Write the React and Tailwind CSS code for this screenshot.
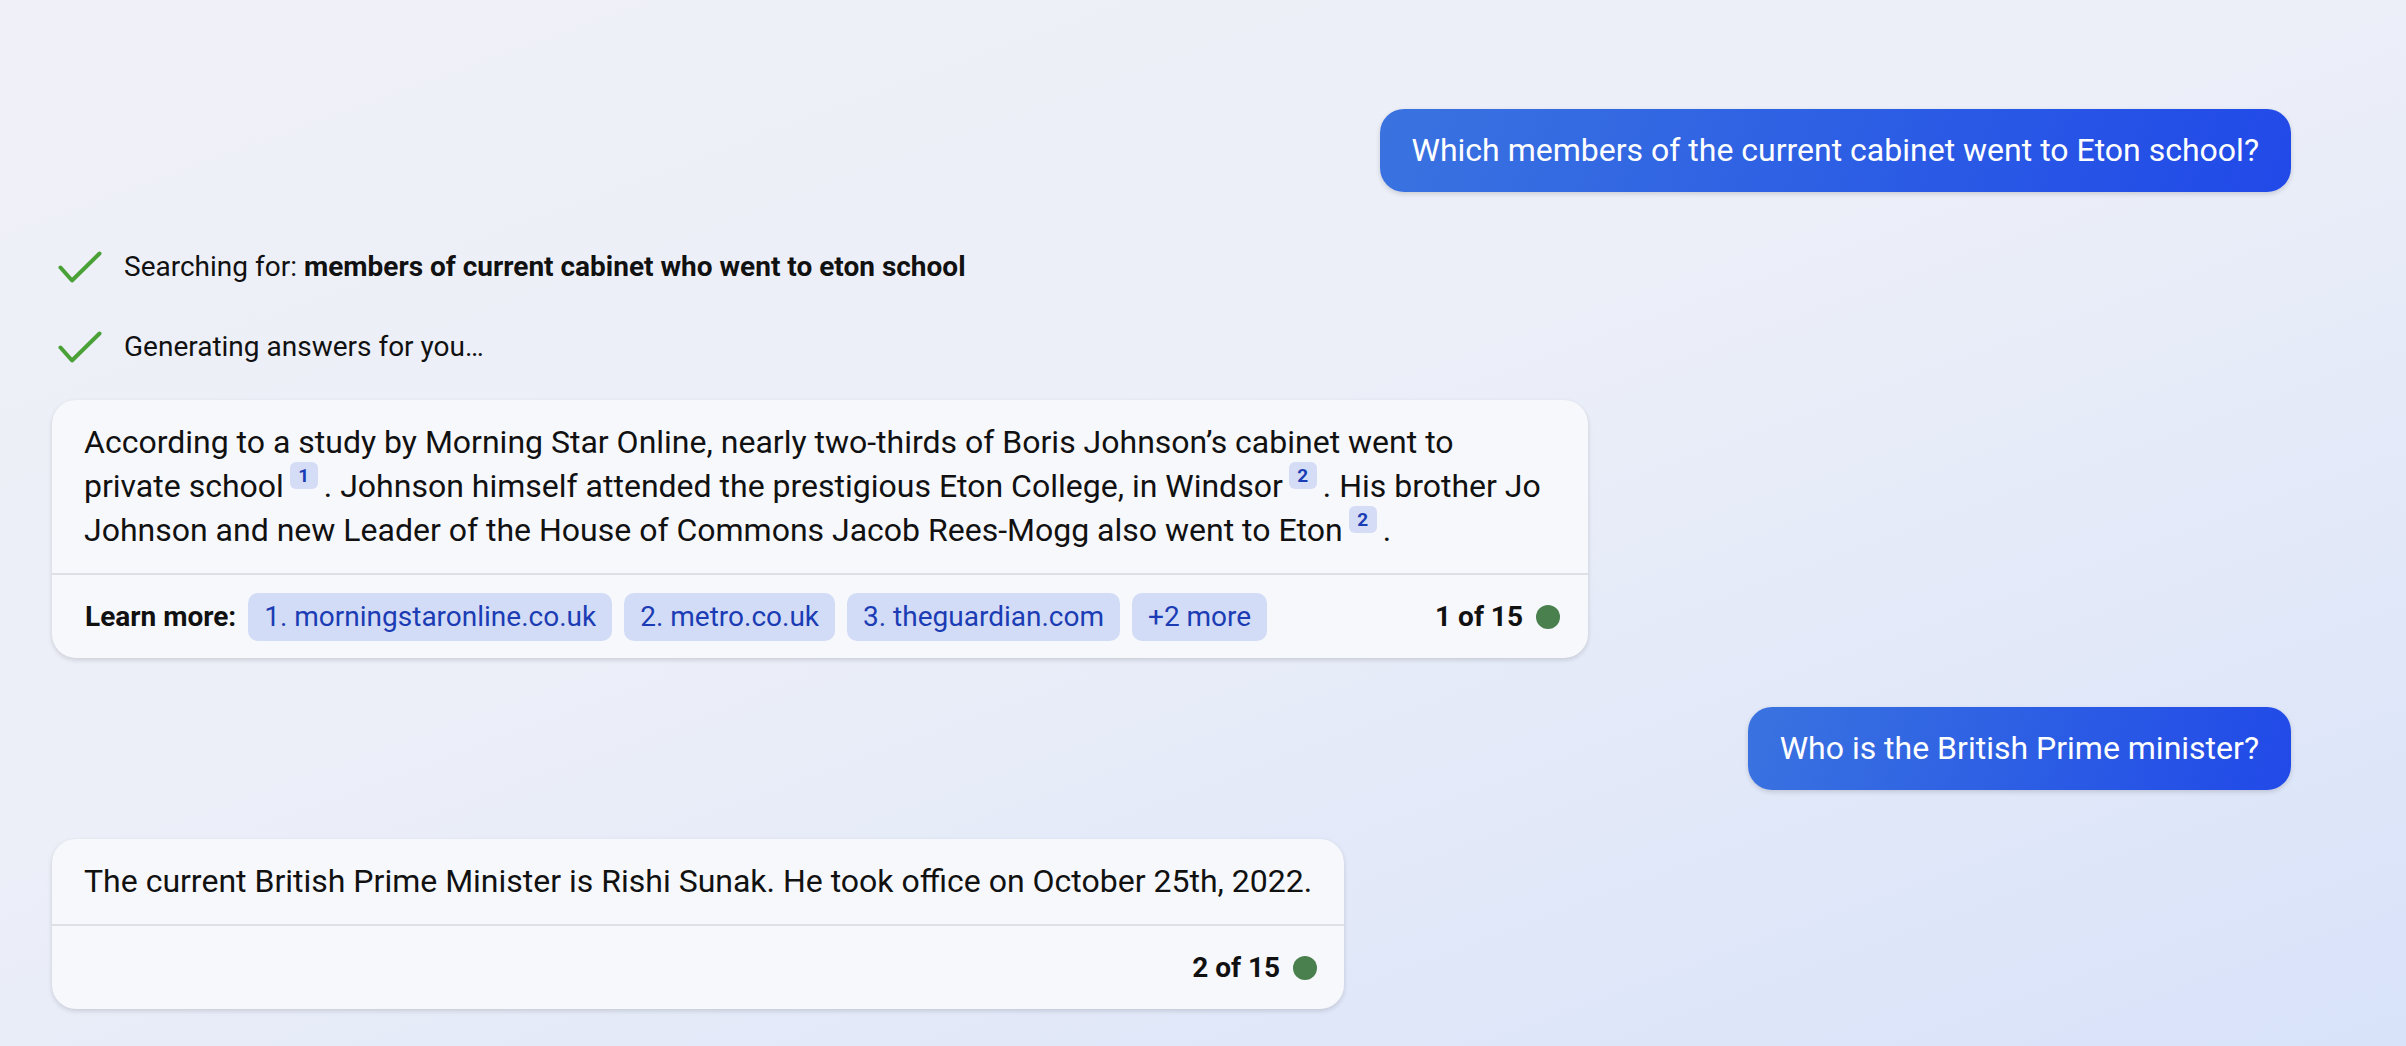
import React from "react";

function Check() {
  return (
    <svg width="44" height="32" viewBox="0 0 44 32" className="ml-[6px] shrink-0">
      <path d="M2.5 16.5 L14 29.5 L41.5 2.5" fill="none" stroke="#4aa137" strokeWidth="4" strokeLinecap="round" strokeLinejoin="round" />
    </svg>
  );
}

function Sup({ n }) {
  return (
    <span className="inline-flex items-center justify-center align-top -mt-[2px] mx-[6px] w-[28px] h-[27px] rounded-[6px] bg-[#d5dcf6] text-[#1a3db5] text-[19px] leading-none font-bold">
      {n}
    </span>
  );
}

function Chip({ children }) {
  return (
    <span className="flex items-center h-[48px] px-[16px] rounded-[10px] bg-[#d3dcf6] text-[#1b3cb4] text-[28px] whitespace-nowrap">
      {children}
    </span>
  );
}

function Counter({ label }) {
  return (
    <div className="ml-auto flex items-center gap-[13px]">
      <span className="text-[28px] font-bold text-[#111]">{label}</span>
      <span className="w-[24px] h-[24px] rounded-full bg-[#4a7f4e]" />
    </div>
  );
}

function UserBubble({ children, className }) {
  return (
    <div className={"self-end rounded-[24px] px-[32px] py-[20px] text-[32px] leading-[43px] text-white whitespace-nowrap bg-[linear-gradient(110deg,#3a73e0_0%,#2d5fe4_50%,#2149e8_100%)] shadow-[0_2px_5px_rgba(0,0,0,0.15)] " + (className || "")}>
      {children}
    </div>
  );
}

export default function App() {
  return (
    <div className="h-[1046px] w-full overflow-hidden bg-[linear-gradient(160deg,#eff0f8_0%,#eceff8_45%,#d8e2f9_100%)] font-['Roboto','Liberation_Sans',sans-serif] text-[#111]">
      <div className="flex flex-col pl-[52px] pr-[115px] pt-[109px]">
        <UserBubble>Which members of the current cabinet went to Eton school?</UserBubble>

        <div className="mt-[55px] flex items-center h-[40px] gap-[22px] text-[28px] leading-[40px]">
          <Check />
          <span>
            Searching for: <span className="font-bold">members of current cabinet who went to eton school</span>
          </span>
        </div>
        <div className="mt-[40px] flex items-center h-[40px] gap-[22px] text-[28px] leading-[40px]">
          <Check />
          <span>Generating answers for you…</span>
        </div>

        <div className="mt-[33px] w-[1536px] rounded-[24px] bg-[#f7f8fc] shadow-[0_2px_5px_rgba(0,0,0,0.14)]">
          <div className="px-[32px] pt-[20px] pb-[21px] text-[32px] leading-[44px] border-b-2 border-[#dfe0e6]">
            According to a study by Morning Star Online, nearly two-thirds of Boris Johnson’s cabinet went to
            <br />
            private school<Sup n="1" />. Johnson himself attended the prestigious Eton College, in Windsor<Sup n="2" />. His brother Jo
            <br />
            Johnson and new Leader of the House of Commons Jacob Rees-Mogg also went to Eton<Sup n="2" />.
          </div>
          <div className="h-[83px] pl-[33px] pr-[28px] flex items-center gap-[12px]">
            <span className="text-[28px] font-bold text-[#111]">Learn more:</span>
            <Chip>1. morningstaronline.co.uk</Chip>
            <Chip>2. metro.co.uk</Chip>
            <Chip>3. theguardian.com</Chip>
            <Chip>+2 more</Chip>
            <Counter label="1 of 15" />
          </div>
        </div>

        <UserBubble className="mt-[49px]">Who is the British Prime minister?</UserBubble>

        <div className="mt-[49px] w-fit rounded-[24px] bg-[#f7f8fc] shadow-[0_2px_5px_rgba(0,0,0,0.14)]">
          <div className="px-[32px] pt-[20px] pb-[21px] text-[32px] leading-[44px] border-b-2 border-[#dfe0e6] whitespace-nowrap">
            The current British Prime Minister is Rishi Sunak. He took office on October 25th, 2022.
          </div>
          <div className="h-[83px] pl-[35px] pr-[27px] flex items-center">
            <Counter label="2 of 15" />
          </div>
        </div>
      </div>
    </div>
  );
}
